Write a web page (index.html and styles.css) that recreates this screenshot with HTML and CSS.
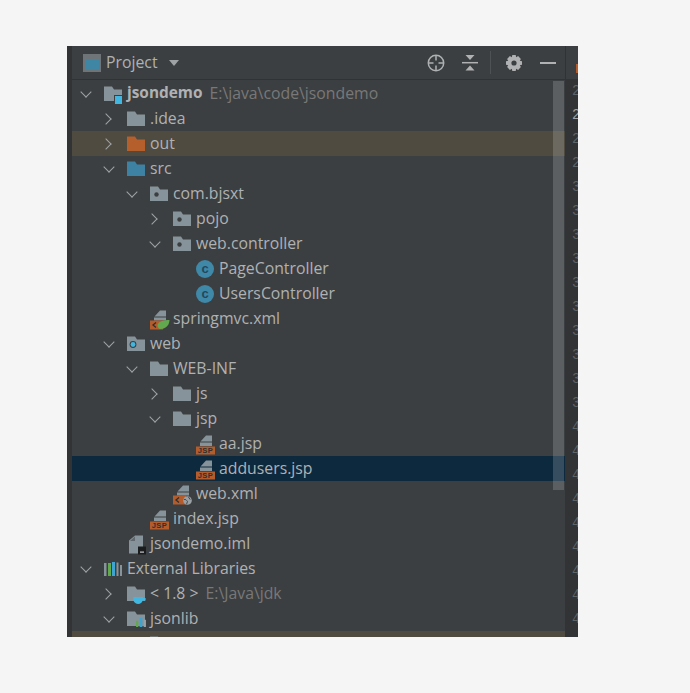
FILE: index.html
```html
<!DOCTYPE html>
<html lang="en">
<head>
<meta charset="utf-8">
<title>Project</title>
<link rel="stylesheet" href="styles.css">
</head>
<body>
<svg class="sprite" aria-hidden="true">
  <symbol id="folder" viewBox="0 0 18 22"><path d="M0 3.5H8L10 6.5H18V18H0Z"/></symbol>
  <symbol id="package" viewBox="0 0 18 22"><path fill="#87939a" d="M0 3.5H8L10 6.5H18V18H0Z"/><circle cx="6.5" cy="11.5" r="2.2" fill="#3c3f41"/></symbol>
  <symbol id="webfolder" viewBox="0 0 18 22"><path fill="#87939a" d="M0 3.5H8L10 6.5H18V18H0Z"/><circle cx="6" cy="11.5" r="3.4" fill="#3c3f41"/><circle cx="6" cy="11.5" r="2.4" fill="#40b6e0"/></symbol>
  <symbol id="module" viewBox="0 0 18 22"><path fill="#87939a" d="M0 3.5H8L10 6.5H18V18H0Z"/><rect x="10" y="12" width="9" height="9" fill="#3c3f41"/><rect x="11" y="13" width="8" height="8" fill="#40b6e0"/></symbol>
  <symbol id="cls" viewBox="0 0 18 22"><circle cx="9" cy="11" r="9" fill="#3f88a8"/><text x="9" y="15" class="cls-letter">c</text></symbol>
  <symbol id="jsp" viewBox="0 0 20 22"><path fill="#87939a" d="M10 2.5H16V8.5H4.5Z"/><rect x="4" y="9.5" width="12" height="3.5" fill="#87939a"/><rect y="13.5" width="19" height="8" fill="#b45c2b"/><text x="9.5" y="20.3" class="jsp-tag">JSP</text></symbol>
  <symbol id="xml" viewBox="0 0 20 22"><path fill="#87939a" d="M10 2.5H16V8.5H4.5Z"/><rect x="4" y="9.5" width="12" height="3" fill="#87939a"/><rect y="12.5" width="13" height="9" fill="#b45c2b"/><path d="M6 14.5 3 17 6 19.5" fill="none" stroke="#2f2f2f" stroke-width="1.3"/></symbol>
  <symbol id="iml" viewBox="0 0 20 22"><path fill="#87939a" d="M2 7.5 8 2.5H16V20.5H2Z"/><path fill="#3c3f41" d="M8 3.5V8H3Z" opacity=".5"/><rect x="11" y="13.5" width="8" height="8" fill="#1b1c1d"/><rect x="13" y="18.5" width="4" height="1.2" fill="#c7c9ca"/></symbol>
  <symbol id="libs" viewBox="0 0 18 22"><rect x="0" y="5" width="2.5" height="13" fill="#87939a"/><rect x="4" y="5" width="3" height="13" fill="#62a84f"/><rect x="8" y="4" width="3" height="14" fill="#3fa4cf"/><rect x="12.5" y="4.5" width="2" height="13.5" fill="#87939a"/><rect x="16" y="7" width="2" height="11" fill="#87939a"/></symbol>
</svg>

<main class="panel">
  <div class="strip"></div>
  <div class="content">
    <header class="toolbar">
      <div class="toolbar-main">
        <svg class="win-icon" viewBox="0 0 18 18"><rect width="18" height="18" fill="#6e7478"/><rect x="2" y="5" width="14" height="11" fill="#3e86a3"/></svg>
        <span class="toolbar-title">Project</span>
        <svg class="caret" viewBox="0 0 10 6"><path d="M0 0H10L5 6Z"/></svg>
        <span class="spring"></span>
        <svg class="tool tool-locate" viewBox="0 0 18 18"><circle cx="9" cy="9" r="7.7" fill="none" stroke="#afb1b3" stroke-width="1.5"/><path d="M9 1V6.5M9 11.5V17M1 9H6.5M11.5 9H17" stroke="#afb1b3" stroke-width="1.5"/></svg>
        <svg class="tool tool-collapse" viewBox="0 0 16 16"><path d="M0 7.7H16" stroke="#afb1b3" stroke-width="1.5"/><path fill="#afb1b3" d="M3.5 0H12.5L8 5ZM3.5 15.5H12.5L8 10.5Z"/></svg>
        <span class="tool-sep"></span>
        <svg class="tool tool-gear" viewBox="0 0 16 16"><path fill="#afb1b3" fill-rule="evenodd" d="M6.3 0H9.7L10.2 2.2 12.1 1.1 14.9 3.9 13.8 5.8 16 6.3V9.7L13.8 10.2 14.9 12.1 12.1 14.9 10.2 13.8 9.7 16H6.3L5.8 13.8 3.9 14.9 1.1 12.1 2.2 10.2 0 9.7V6.3L2.2 5.8 1.1 3.9 3.9 1.1 5.8 2.2ZM8 5.4A2.6 2.6 0 1 0 8 10.6 2.6 2.6 0 1 0 8 5.4Z"/></svg>
        <span class="tool-minus"></span>
      </div>
      <div class="toolbar-tab"><span class="tab-mark"></span></div>
    </header>
    <div class="body">
      <div class="tree">
        <div class="row l0"><i class="arrow open"></i><svg class="ico f-grey"><use href="#module"/></svg><b class="name">jsondemo</b><span class="path">E:\java\code\jsondemo</span></div>
        <div class="row l1"><i class="arrow"></i><svg class="ico f-grey"><use href="#folder"/></svg><span class="name">.idea</span></div>
        <div class="row l1 excluded"><i class="arrow"></i><svg class="ico f-orange"><use href="#folder"/></svg><span class="name">out</span></div>
        <div class="row l1"><i class="arrow open"></i><svg class="ico f-blue"><use href="#folder"/></svg><span class="name">src</span></div>
        <div class="row l2"><i class="arrow open"></i><svg class="ico"><use href="#package"/></svg><span class="name">com.bjsxt</span></div>
        <div class="row l3"><i class="arrow"></i><svg class="ico"><use href="#package"/></svg><span class="name">pojo</span></div>
        <div class="row l3"><i class="arrow open"></i><svg class="ico"><use href="#package"/></svg><span class="name">web.controller</span></div>
        <div class="row l4"><i class="arrow none"></i><svg class="ico"><use href="#cls"/></svg><span class="name">PageController</span></div>
        <div class="row l4"><i class="arrow none"></i><svg class="ico"><use href="#cls"/></svg><span class="name">UsersController</span></div>
        <div class="row l2"><i class="arrow none"></i>
          <span class="file-ico"><svg class="ico wide"><use href="#xml"/></svg><svg class="badge leaf" viewBox="0 0 12 9"><path fill="#62a84f" d="M0 5C1 1 7 0 12 0 12 6 7 9 3 9 1 9 0 7 0 5Z"/></svg></span>
          <span class="name">springmvc.xml</span></div>
        <div class="row l1"><i class="arrow open"></i><svg class="ico"><use href="#webfolder"/></svg><span class="name">web</span></div>
        <div class="row l2"><i class="arrow open"></i><svg class="ico f-grey"><use href="#folder"/></svg><span class="name">WEB-INF</span></div>
        <div class="row l3"><i class="arrow"></i><svg class="ico f-grey"><use href="#folder"/></svg><span class="name">js</span></div>
        <div class="row l3"><i class="arrow open"></i><svg class="ico f-grey"><use href="#folder"/></svg><span class="name">jsp</span></div>
        <div class="row l4"><i class="arrow none"></i><svg class="ico wide"><use href="#jsp"/></svg><span class="name">aa.jsp</span></div>
        <div class="row l4 selected"><i class="arrow none"></i><svg class="ico wide"><use href="#jsp"/></svg><span class="name">addusers.jsp</span></div>
        <div class="row l3"><i class="arrow none"></i>
          <span class="file-ico"><svg class="ico wide"><use href="#xml"/></svg><svg class="badge globe" viewBox="0 0 10 10"><circle cx="5" cy="5" r="4.8" fill="#9aa0a4"/><path d="M1 4C3 3 4 5 5 6L4 9M6 1 8 4" stroke="#3c3f41" fill="none"/></svg></span>
          <span class="name">web.xml</span></div>
        <div class="row l2"><i class="arrow none"></i><svg class="ico wide"><use href="#jsp"/></svg><span class="name">index.jsp</span></div>
        <div class="row l1"><i class="arrow none"></i><svg class="ico wide"><use href="#iml"/></svg><span class="name">jsondemo.iml</span></div>
        <div class="row l0"><i class="arrow open"></i><svg class="ico"><use href="#libs"/></svg><span class="name">External Libraries</span></div>
        <div class="row l1"><i class="arrow"></i>
          <span class="file-ico"><svg class="ico f-grey"><use href="#folder"/></svg><svg class="badge cup" viewBox="0 0 14 8"><path fill="#40b6e0" d="M0 0H11V1H14V4H10.5C10 6.5 8 8 5.5 8S1 6.5 0 4Z"/></svg></span>
          <span class="name">&lt; 1.8 &gt;</span><span class="path">E:\Java\jdk</span></div>
        <div class="row l1"><i class="arrow open"></i>
          <span class="file-ico"><svg class="ico f-grey"><use href="#folder"/></svg><svg class="badge bars" viewBox="0 0 11 10"><rect y="3" width="2.5" height="7" fill="#62a84f"/><rect x="4" width="3" height="10" fill="#3fa4cf"/><rect x="8.5" y="2" width="2.5" height="8" fill="#9aa0a4"/></svg></span>
          <span class="name">jsonlib</span></div>
        <div class="row l2 excluded"><i class="arrow none"></i><svg class="ico"><use href="#folder"/></svg></div>
        <div class="scrollbar"></div>
      </div>
      <div class="gutter">
        <div>26</div><div class="current">27</div><div>28</div><div>29</div>
        <div>30</div><div>31</div><div>32</div><div>33</div><div>34</div><div>35</div><div>36</div><div>37</div><div>38</div><div>39</div>
        <div>40</div><div>41</div><div>42</div><div>43</div><div>44</div><div>45</div><div>46</div><div>47</div><div>48</div>
      </div>
    </div>
  </div>
</main>
</body>
</html>
```
FILE: styles.css
```css
* { box-sizing: border-box; }
html, body { margin: 0; padding: 0; }
body { background: #f5f5f5; height: 693px; overflow: hidden; font-family: "Open Sans", "Noto Sans", sans-serif; }
.sprite { display: none; }

.panel { display: flex; width: 511px; height: 591px; margin: 46px 0 0 67px; background: #3c3f41; overflow: hidden; }
.strip { flex: 0 0 5px; background: #313335; }
.content { flex: 1; min-width: 0; display: flex; flex-direction: column; }

.toolbar { flex: 0 0 34px; display: flex; border-bottom: 1px solid #323232; }
.toolbar-main { flex: 0 0 494px; display: flex; align-items: center; padding: 0 9px 0 11px; border-right: 1px solid #323232; }
.win-icon { width: 18px; height: 18px; }
.toolbar-title { margin-left: 5px; margin-top: -2px; font-size: 15.8px; color: #afb1b3; }
.caret { width: 10px; height: 6px; margin-left: 11px; fill: #a0a3a5; }
.spring { flex: 1; }
.tool-locate { width: 18px; height: 18px; }
.tool-collapse { width: 16px; height: 16px; margin-left: 17px; }
.tool-sep { width: 1px; height: 23px; margin-left: 12px; background: #4e5254; }
.tool-gear { width: 16px; height: 16px; margin-left: 15px; }
.tool-minus { width: 16px; height: 2px; margin-left: 18px; background: #afb1b3; }
.toolbar-tab { flex: 1; position: relative; }
.tab-mark { position: absolute; right: 0; top: 18px; width: 2px; height: 9px; background: #b45c2b; }

.body { flex: 1; min-height: 0; display: flex; background: #3c3f41; }
.tree { flex: 0 0 493px; position: relative; padding-top: 1px; overflow: hidden; }
.row { height: 25px; display: flex; align-items: center; white-space: nowrap; font-size: 15.8px; color: #afb1b3; }
.l0 { padding-left: 6px; }
.l1 { padding-left: 29px; }
.l2 { padding-left: 52px; }
.l3 { padding-left: 75px; }
.l4 { padding-left: 98px; }
.excluded { background: #4f4b41; }
.selected { background: #0d293e; }

.arrow { flex: 0 0 16px; height: 16px; margin-right: 10px; position: relative; }
.arrow::before { content: ""; position: absolute; left: 1px; top: 4px; width: 7px; height: 7px; border-top: 1.5px solid #a0a3a5; border-right: 1.5px solid #a0a3a5; transform: rotate(45deg); }
.arrow.open::before { left: 4px; top: 2px; transform: rotate(135deg); }
.arrow.none::before { display: none; }

.ico { flex: 0 0 18px; width: 18px; height: 22px; margin-right: 5px; overflow: visible; }
.ico.wide { width: 20px; flex-basis: 20px; margin-right: 3px; }
.f-grey { fill: #87939a; }
.f-orange { fill: #b55f2d; }
.f-blue { fill: #3d82a3; }
.row .ico:not(.f-grey):not(.f-orange):not(.f-blue) { fill: #87939a; }
.jsp-tag { font: bold 7.5px "Liberation Sans", sans-serif; fill: #2f2f2f; text-anchor: middle; letter-spacing: .4px; }
.cls-letter { font: bold 13px "Liberation Sans", sans-serif; fill: #24475a; text-anchor: middle; }

.file-ico { flex: 0 0 23px; height: 22px; display: flex; position: relative; }
.badge { position: absolute; }
.badge.leaf { left: 7px; top: 12.5px; width: 13px; height: 9px; }
.badge.globe { left: 10px; top: 13px; width: 9px; height: 9px; }
.badge.cup { left: 6px; top: 14.5px; width: 13px; height: 7px; }
.badge.bars { left: 9px; top: 10.5px; width: 10px; height: 9px; }

.name { color: #afb1b3; margin-top: -2px; }
b.name { font-weight: 700; font-size: 15.4px; }
.path { margin-left: 7px; margin-top: -2px; color: #787878; }

.scrollbar { position: absolute; left: 481px; top: 1px; width: 11px; height: 409px; background: rgba(255,255,255,.17); }

.gutter { flex: 1; min-width: 0; margin-top: -1px; padding-left: 7px; background: #313335; font: 14px/24px "Liberation Mono", monospace; color: #5f6467; overflow: hidden; white-space: nowrap; }
.gutter .current { color: #a4a3a3; }
```
